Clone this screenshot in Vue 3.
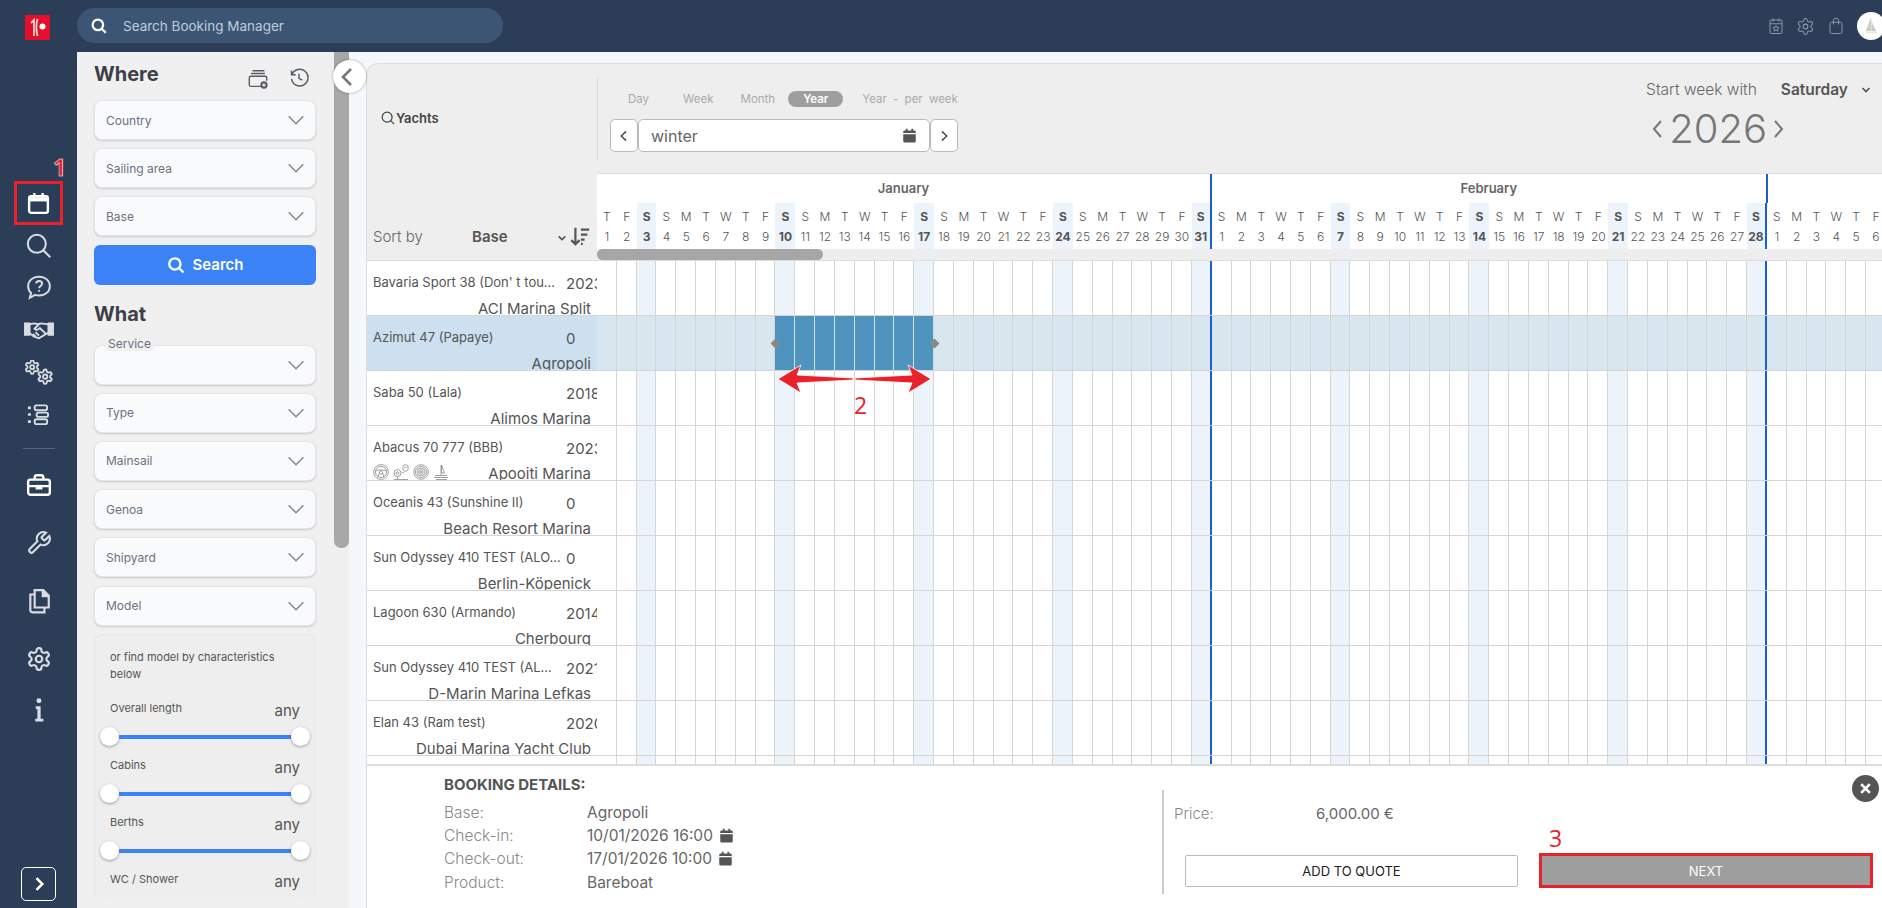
<template>
  <div class="app">
    <header class="topbar">
      <div class="logo">
        <svg viewBox="0 0 25 25" width="25" height="25">
          <rect width="25" height="25" fill="#e30f2c" />
          <path d="M6 8l3-3v16M12.500 4c-1.500 5-1.500 11 0 17" fill="none" stroke="#f7d6c8" stroke-width="1.800" />
          <circle cx="17.500" cy="11.500" r="3" fill="#fff" />
        </svg>
      </div>
      <div class="global-search">
        <svg viewBox="0 0 24 24" width="18" height="18" fill="none" stroke="#fff" stroke-width="3">
          <circle cx="10.500" cy="10.500" r="7" />
          <path d="M16 16l5 5" />
        </svg>
        <span>Search Booking Manager</span>
      </div>
      <div class="top-actions">
        <svg viewBox="0 0 24 24" width="18" height="18" fill="none" stroke="#8d9bb0" stroke-width="1.300">
          <rect x="4" y="4" width="16" height="18" rx="1.500" />
          <path d="M4 9h16M8 2v4M16 2v4M12 11.500l1.300 2.500 2.700.3-2 1.800.6 2.700-2.600-1.400-2.600 1.400.6-2.700-2-1.800 2.700-.3z" />
        </svg>
        <svg viewBox="0 0 24 24" width="19" height="19" fill="none" stroke="#8d9bb0" stroke-width="1.300">
          <path :d="gearPath" />
          <circle cx="12" cy="12" r="3" />
        </svg>
        <svg viewBox="0 0 24 24" width="18" height="18" fill="none" stroke="#8d9bb0" stroke-width="1.300">
          <rect x="4" y="7" width="16" height="15" rx="2" />
          <path d="M8.500 10V5a3.500 3.500 0 0 1 7 0v5" />
        </svg>
        <div class="avatar">
          <svg viewBox="0 0 24 24" width="20" height="20">
            <path d="M12 3v15H6zM13 8l5 10h-5zM6 20h13" fill="#c9cfc9" stroke="#c0c8c0" stroke-width="0.600" />
          </svg>
        </div>
      </div>
    </header>

    <div class="layout">
      <nav class="nav">
        <div class="nav-item">
          <svg viewBox="0 0 24 24" width="25" height="25" fill="none" stroke="#fff" stroke-width="2.300">
            <rect x="3" y="5" width="18" height="16" rx="2" />
            <path d="M3 8h18" stroke-width="4" />
            <path d="M8 2v4M16 2v4" />
          </svg>
        </div>
        <div class="nav-item">
          <svg viewBox="0 0 24 24" width="27" height="27" fill="none" stroke="#d8dde3" stroke-width="1.800">
            <circle cx="10.500" cy="10.500" r="8" />
            <path d="M16.500 16.500l6 6" />
          </svg>
        </div>
        <div class="nav-item">
          <svg viewBox="0 0 24 24" width="26" height="26" fill="none" stroke="#d8dde3" stroke-width="1.800">
            <path d="M12 2.500c5.800 0 10 3.700 10 8.700s-4.200 8.700-10 8.700c-1.300 0-2.500-.2-3.600-.6L3.500 22l1.200-4.500C3 15.900 2 13.700 2 11.200c0-5 4.200-8.700 10-8.700z" />
            <path d="M9.300 8.700c.3-1.500 1.400-2.300 2.800-2.300 1.600 0 2.800 1 2.800 2.400 0 2.200-2.800 2.300-2.800 4.300" />
            <path d="M12.100 14.800v1.500" />
          </svg>
        </div>
        <div class="nav-item">
          <svg viewBox="0 0 34 24" width="30" height="21" fill="none" stroke="#d8dde3" stroke-width="2.200">
            <path d="M1 5h5v13H1z" fill="#d8dde3" />
            <path d="M33 5h-5v13h5z" fill="#d8dde3" />
            <path d="M6 6l6-1 4 1 3-1 9 1v10l-3 1-8 5-3-1-3-1-5-4z" />
            <path d="M17 6l-5 5c1.500 2 4 1.500 6-.5l7 6.500M10 17l3 3M13 15l4 4" />
          </svg>
        </div>
        <div class="nav-item">
          <svg class="gears" viewBox="0 0 28 26" width="28" height="26" fill="none" stroke="#d8dde3" stroke-width="2.600">
            <g transform="translate(-1 -1) scale(0.680)">
              <path :d="gearPath" />
              <circle cx="12" cy="12" r="3" />
            </g>
            <g transform="translate(11.500 8) scale(0.720)">
              <path :d="gearPath" />
              <circle cx="12" cy="12" r="3" />
            </g>
          </svg>
        </div>
        <div class="nav-item">
          <svg class="list" viewBox="0 0 24 24" width="23" height="23" fill="none" stroke="#d8dde3" stroke-width="2">
            <rect x="8" y="2.500" width="13" height="5" rx="2" />
            <rect x="10" y="10" width="12" height="4.500" rx="2" />
            <rect x="8" y="17" width="13" height="5" rx="2" />
            <path d="M1 5h3M1 12h3M1 19.500h3" stroke-width="2.800" />
          </svg>
        </div>
        <div class="nav-divider"></div>
        <div class="nav-item tall">
          <svg viewBox="0 0 24 24" width="26" height="26" fill="none" stroke="#fff" stroke-width="2.200">
            <rect x="2" y="7" width="20" height="14" rx="2" />
            <path d="M8 7V5a2 2 0 0 1 2-2h4a2 2 0 0 1 2 2v2M2 13h20" />
            <path d="M10 13h4v2h-4z" fill="#fff" />
          </svg>
        </div>
        <div class="nav-item tall">
          <svg viewBox="0 0 24 24" width="26" height="26" fill="none" stroke="#d8dde3" stroke-width="1.900">
            <path d="M14.700 6.300a1 1 0 0 0 0 1.400l1.600 1.600a1 1 0 0 0 1.400 0l3.770-3.770a6 6 0 0 1-7.940 7.940l-6.910 6.910a2.120 2.120 0 0 1-3-3l6.910-6.910a6 6 0 0 1 7.940-7.940l-3.760 3.760z" />
          </svg>
        </div>
        <div class="nav-item tall">
          <svg viewBox="0 0 24 24" width="26" height="26" fill="none" stroke="#d8dde3" stroke-width="2">
            <path d="M8 2h8l5 5v11H8z" />
            <path d="M15.500 2v5.500H21" fill="#d8dde3" />
            <path d="M8 6H4v15a2 2 0 0 0 2 1.500h11v-4" />
          </svg>
        </div>
        <div class="nav-item tall">
          <svg viewBox="0 0 24 24" width="26" height="26" fill="none" stroke="#d8dde3" stroke-width="2">
            <path :d="gearPath" />
            <circle cx="12" cy="12" r="3" />
          </svg>
        </div>
        <div class="nav-item last">
          <svg viewBox="0 0 24 24" width="26" height="26" fill="#d8dde3">
            <circle cx="12" cy="3.500" r="2.300" />
            <path d="M9 8.500h4.500V20H16v2.500H8.500V20h2v-9H9z" />
          </svg>
        </div>
        <button class="nav-expand">
          <svg viewBox="0 0 24 24" width="20" height="20" fill="none" stroke="#fff" stroke-width="3">
            <path d="M9 5l7 7-7 7" />
          </svg>
        </button>
      </nav>

      <aside class="filters">
        <div class="filter-title">
          <h2>Where</h2>
          <svg viewBox="0 0 24 24" width="22" height="22" fill="none" stroke="#555c66" stroke-width="1.500">
            <path d="M6 3h13M4.500 6h15" />
            <path d="M15 20H4a1.500 1.500 0 0 1-1.500-1.500v-8A1.500 1.500 0 0 1 4 9h16a1.500 1.500 0 0 1 1.500 1.500V14" />
            <circle cx="18.500" cy="18.500" r="4" fill="#555c66" stroke="none" />
            <path d="M16.500 18.500h4M18.500 16.500v4" stroke="#fff" stroke-width="1.200" />
          </svg>
          <svg viewBox="0 0 24 24" width="20" height="20" fill="none" stroke="#555c66" stroke-width="1.700">
            <path d="M3 3v5h5" />
            <path d="M3.500 8A10 10 0 1 1 3 13" />
            <path d="M12 7v5.500l4 2" />
          </svg>
        </div>
        <div class="field" v-for="f in whereFields" :key="f">
          <span>{{ f }}</span>
          <svg class="chev" viewBox="0 0 24 24" width="22" height="22" fill="none" stroke="#7f8894" stroke-width="1.600">
            <path d="M4 8l8 8 8-8" />
          </svg>
        </div>
        <button class="search-btn">
          <svg viewBox="0 0 24 24" width="18" height="18" fill="none" stroke="#fff" stroke-width="3">
            <circle cx="10.500" cy="10.500" r="7.500" />
            <path d="M16 16l6 6" />
          </svg>
          Search
        </button>
        <h2 class="what">What</h2>
        <div class="field service">
          <label>Service</label>
          <svg class="chev" viewBox="0 0 24 24" width="22" height="22" fill="none" stroke="#7f8894" stroke-width="1.600">
            <path d="M4 8l8 8 8-8" />
          </svg>
        </div>
        <div class="field" v-for="f in whatFields" :key="f">
          <span>{{ f }}</span>
          <svg class="chev" viewBox="0 0 24 24" width="22" height="22" fill="none" stroke="#7f8894" stroke-width="1.600">
            <path d="M4 8l8 8 8-8" />
          </svg>
        </div>
        <div class="characteristics">
          <p>or find model by characteristics below</p>
          <div class="range" v-for="r in ranges" :key="r">
            <div class="range-label">
              <span>{{ r }}</span>
              <em>any</em>
            </div>
            <div class="slider">
              <i></i>
              <b></b>
              <i></i>
            </div>
          </div>
        </div>
      </aside>

      <div class="filters-scroll"><div class="filters-thumb"></div></div>

      <main class="main">
        <button class="collapse">
          <svg viewBox="0 0 24 24" width="24" height="24" fill="none" stroke="#777" stroke-width="2.600">
            <path d="M15 4l-8 8 8 8" />
          </svg>
        </button>
        <div class="card">
          <div class="head">
            <div class="head-left">
              <svg viewBox="0 0 24 24" width="14" height="14" fill="none" stroke="#444" stroke-width="2.200">
                <circle cx="10.500" cy="10.500" r="8.500" />
                <path d="M16.500 16.500l6 6" />
              </svg>
              <span>Yachts</span>
            </div>
            <div class="head-center">
              <div class="tabs">
                <span v-for="t in tabs" :key="t" :class="{ active: t === 'Year' }">{{ t }}</span>
              </div>
              <div class="date-nav">
                <button>
                  <svg viewBox="0 0 24 24" width="16" height="16" fill="none" stroke="#555" stroke-width="2.500"><path d="M15 5l-7 7 7 7" /></svg>
                </button>
                <div class="date-input">
                  <span>winter</span>
                  <svg viewBox="0 0 24 24" width="15" height="15" fill="#555">
                    <path :d="calPath" />
                  </svg>
                </div>
                <button>
                  <svg viewBox="0 0 24 24" width="16" height="16" fill="none" stroke="#555" stroke-width="2.500"><path d="M9 5l7 7-7 7" /></svg>
                </button>
              </div>
            </div>
            <div class="head-right">
              <div class="week-start">
                <span>Start week with</span>
                <strong>Saturday</strong>
                <svg viewBox="0 0 24 24" width="12" height="12" fill="none" stroke="#555" stroke-width="3.500"><path d="M5 8l7 7 7-7" /></svg>
              </div>
              <div class="year">
                <svg viewBox="0 0 12 24" width="12" height="24" fill="none" stroke="#777" stroke-width="2"><path d="M10 4l-7 8 7 8" /></svg>
                <span>2026</span>
                <svg viewBox="0 0 12 24" width="12" height="24" fill="none" stroke="#777" stroke-width="2"><path d="M2 4l7 8-7 8" /></svg>
              </div>
            </div>
          </div>

          <div class="cal-head">
            <div class="sort">
              <span class="sort-by">Sort by</span>
              <strong>Base</strong>
              <svg viewBox="0 0 24 24" width="10" height="10" fill="none" stroke="#555" stroke-width="4"><path d="M4 8l8 8 8-8" /></svg>
              <svg viewBox="0 0 24 24" width="22" height="22" fill="none" stroke="#555" stroke-width="2.400">
                <path d="M7 3v18M2.500 16.500L7 21l4.500-4.500M13 5h9M13 10.500h7M13 16h4M13 20.500h2" />
              </svg>
            </div>
            <div class="timeline">
              <div class="months">
                <div
                  v-for="m in months"
                  :key="m.name"
                  class="month"
                  :style="{ width: m.days * dayWidth + 'px' }"
                >
                  {{ m.label }}
                </div>
              </div>
              <div class="days">
                <div
                  v-for="d in days"
                  :key="d.i"
                  class="day"
                  :class="{ sat: d.sat, end: d.end }"
                >
                  <span>{{ d.letter }}</span>
                  <span>{{ d.num }}</span>
                </div>
              </div>
              <div class="hscroll"><div class="hthumb"></div></div>
            </div>
          </div>

          <div class="sheet">
            <div
              v-for="(y, r) in yachts"
              :key="r"
              class="row"
              :class="{ picked: y.picked }"
            >
              <div class="yacht">
                <div class="yacht-top">
                  <span class="yacht-name">{{ y.name }}</span>
                  <span class="yacht-year">{{ y.year }}</span>
                </div>
                <div class="yacht-bottom">
                  <div v-if="y.icons" class="yacht-icons">
                    <svg viewBox="0 0 16 16" width="16" height="16" fill="none" stroke="#888" stroke-width="0.800">
                      <circle cx="8" cy="8" r="7.400" />
                      <circle cx="8" cy="8" r="5.600" />
                      <path d="M2.500 7c3-1.500 8-1.500 11 0M6.500 8.500L5 13M9.500 8.500L11 13" />
                      <circle cx="8" cy="8.500" r="1.600" />
                    </svg>
                    <svg viewBox="0 0 16 16" width="16" height="16" fill="none" stroke="#888" stroke-width="0.800">
                      <circle cx="4.500" cy="9" r="3.500" />
                      <circle cx="4.500" cy="9" r="1.300" />
                      <path d="M4.500 12.500v3M1 15.500h14" />
                      <rect x="10" y="1" width="5" height="6" rx="1.500" />
                      <path d="M11.500 3.500h2M9 8l2 1" />
                    </svg>
                    <svg viewBox="0 0 16 16" width="16" height="16" fill="none" stroke="#888" stroke-width="0.800">
                      <circle cx="8" cy="8" r="7.300" />
                      <circle cx="8" cy="8" r="5.600" />
                      <circle cx="8" cy="8" r="3.900" />
                      <circle cx="8" cy="8" r="2.200" />
                      <circle cx="8" cy="8" r="0.700" />
                    </svg>
                    <svg viewBox="0 0 16 16" width="16" height="16" fill="none" stroke="#888" stroke-width="0.800">
                      <path d="M8.500 1l3 8H8.500zM8 1v10M2 11.500h12M1 13.500h14M3 15.500h11" />
                    </svg>
                  </div>
                  <span class="yacht-base">{{ y.base }}</span>
                </div>
              </div>
              <div class="cells">
                <div
                  v-for="d in days"
                  :key="d.i"
                  class="cell"
                  :class="{
                    sat: d.sat,
                    end: d.end,
                    booked: y.picked && d.i >= 9 && d.i <= 16,
                  }"
                ></div>
              </div>
              <template v-if="y.picked">
                <span class="handle start"></span>
                <span class="handle stop"></span>
              </template>
            </div>
          </div>

          <section class="details">
            <div class="details-left">
              <h3>BOOKING DETAILS:</h3>
              <div class="detail"><span>Base:</span><b>Agropoli</b></div>
              <div class="detail">
                <span>Check-in:</span><b>10/01/2026 16:00</b>
                <svg viewBox="0 0 24 24" width="15" height="15" fill="#555"><path :d="calPath" /></svg>
              </div>
              <div class="detail">
                <span>Check-out:</span><b>17/01/2026 10:00</b>
                <svg viewBox="0 0 24 24" width="15" height="15" fill="#555"><path :d="calPath" /></svg>
              </div>
              <div class="detail"><span>Product:</span><b>Bareboat</b></div>
            </div>
            <div class="details-right">
              <div class="price"><span>Price:</span><b>6,000.00 €</b></div>
              <div class="actions">
                <button class="quote">ADD TO QUOTE</button>
                <button class="next">NEXT</button>
              </div>
            </div>
            <button class="close">
              <svg viewBox="0 0 24 24" width="13" height="13" fill="none" stroke="#fff" stroke-width="5"><path d="M4 4l16 16M20 4L4 20" /></svg>
            </button>
          </section>
        </div>
      </main>
    </div>

    <div class="mark-box"></div>
    <span class="mark mark-one">1</span>
    <svg class="mark-arrow" viewBox="0 0 170 40" width="170" height="40">
      <path d="M8 19L31 5l-4 10 56 3v2l-56 3 4 10z" fill="#e8212b" stroke="#fff" stroke-width="0.800" />
      <path d="M161 19L138 5l4 10-57 3v2l57 3-4 10z" fill="#e8212b" stroke="#fff" stroke-width="0.800" />
    </svg>
    <span class="mark mark-two">2</span>
    <span class="mark mark-three">3</span>
  </div>
</template>

<script setup>
const gearPath =
  "M12.22 2h-.44a2 2 0 0 0-2 2v.18a2 2 0 0 1-1 1.73l-.43.25a2 2 0 0 1-2 0l-.15-.08a2 2 0 0 0-2.73.73l-.22.38a2 2 0 0 0 .73 2.73l.15.1a2 2 0 0 1 1 1.72v.51a2 2 0 0 1-1 1.74l-.15.09a2 2 0 0 0-.73 2.73l.22.38a2 2 0 0 0 2.73.73l.15-.08a2 2 0 0 1 2 0l.43.25a2 2 0 0 1 1 1.73V20a2 2 0 0 0 2 2h.44a2 2 0 0 0 2-2v-.18a2 2 0 0 1 1-1.73l.43-.25a2 2 0 0 1 2 0l.15.08a2 2 0 0 0 2.73-.73l.22-.39a2 2 0 0 0-.73-2.73l-.15-.08a2 2 0 0 1-1-1.74v-.5a2 2 0 0 1 1-1.74l.15-.09a2 2 0 0 0 .73-2.73l-.22-.38a2 2 0 0 0-2.73-.73l-.15.08a2 2 0 0 1-2 0l-.43-.25a2 2 0 0 1-1-1.73V4a2 2 0 0 0-2-2z";
const calPath =
  "M6 1h3v3h6V1h3v3h2a2 2 0 0 1 2 2v2H2V6a2 2 0 0 1 2-2h2zM2 10h20v11a2 2 0 0 1-2 2H4a2 2 0 0 1-2-2z";

const whereFields = ["Country", "Sailing area", "Base"];
const whatFields = ["Type", "Mainsail", "Genoa", "Shipyard", "Model"];
const ranges = ["Overall length", "Cabins", "Berths", "WC / Shower"];
const tabs = ["Day", "Week", "Month", "Year", "Year - per week"];

const dayWidth = 19.84;
const months = [
  { name: "jan", label: "January", days: 31 },
  { name: "feb", label: "February", days: 28 },
  { name: "mar", label: "", days: 7 },
];

const days = [];
months.forEach((m) => {
  for (let n = 1; n <= m.days; n++) {
    const i = days.length;
    const wd = (4 + i) % 7;
    days.push({
      i,
      num: n,
      letter: "SMTWTFS"[wd],
      sat: wd === 6,
      end: n === m.days && m.name !== "mar",
    });
  }
});

const yachts = [
  { name: "Bavaria Sport 38 (Don' t tou...", year: "2023", base: "ACI Marina Split" },
  { name: "Azimut 47 (Papaye)", year: "0", base: "Agropoli", picked: true },
  { name: "Saba 50 (Lala)", year: "2018", base: "Alimos Marina" },
  { name: "Abacus 70 777 (BBB)", year: "2023", base: "Apooiti Marina", icons: true },
  { name: "Oceanis 43 (Sunshine II)", year: "0", base: "Beach Resort Marina" },
  { name: "Sun Odyssey 410 TEST (ALO...", year: "0", base: "Berlin-Köpenick" },
  { name: "Lagoon 630 (Armando)", year: "2014", base: "Cherbourg" },
  { name: "Sun Odyssey 410 TEST (AL...", year: "2021", base: "D-Marin Marina Lefkas" },
  { name: "Elan 43 (Ram test)", year: "2020", base: "Dubai Marina Yacht Club" },
  { name: "", year: "", base: "" },
];
</script>

<style>
html,
body {
  margin: 0;
  overflow: hidden;
}
</style>

<style scoped>
.app {
  position: relative;
  width: 1882px;
  height: 908px;
  overflow: hidden;
  font-family: Inter, "Noto Sans", sans-serif;
  background: #2c3e57;
  color: #555;
}
button {
  font-family: inherit;
  cursor: pointer;
}

/* top bar */
.topbar {
  height: 52px;
  display: flex;
  align-items: center;
}
.logo {
  width: 77px;
  height: 52px;
  padding: 15px 0 0 25px;
  box-sizing: border-box;
}
.global-search {
  width: 426px;
  height: 35px;
  margin-top: -1px;
  border-radius: 18px;
  background: #3d5575;
  display: flex;
  align-items: center;
  gap: 15px;
  padding-left: 13px;
  box-sizing: border-box;
  color: #c0cbd9;
  font-size: 13.500px;
}
.top-actions {
  margin-left: auto;
  display: flex;
  align-items: center;
  gap: 11.500px;
  margin-right: -3px;
}
.avatar {
  width: 28px;
  height: 28px;
  flex: none;
  border-radius: 50%;
  background: #fff;
  margin-left: 1px;
  display: flex;
  align-items: center;
  justify-content: center;
}

.layout {
  display: flex;
  height: 856px;
}

/* left nav */
.nav {
  width: 77px;
  flex: none;
  padding-top: 130px;
  box-sizing: border-box;
  display: flex;
  flex-direction: column;
  align-items: center;
}
.nav-item {
  height: 42px;
  display: flex;
  align-items: center;
  justify-content: center;
}
.nav-item.tall {
  height: 58px;
}
.nav-item.last {
  height: 44px;
}
.gears {
  margin-top: 4px;
}
.list {
  margin-top: 3px;
}
.nav-divider {
  width: 32px;
  height: 1px;
  background: #56677e;
  margin: 14px 0 7px;
  flex: none;
}
.nav-expand {
  margin-top: auto;
  margin-bottom: 7px;
  width: 35px;
  height: 34px;
  border: 1px solid #fff;
  border-radius: 5px;
  background: transparent;
  padding: 0;
  display: flex;
  align-items: center;
  justify-content: center;
}

/* filters */
.filters {
  width: 257px;
  flex: none;
  background: #f0f0f0;
  padding: 0 18px 0 17px;
  box-sizing: border-box;
  overflow: hidden;
}
h2 {
  margin: 0;
  font-size: 20px;
  font-weight: 700;
  color: #3d3f47;
}
.filter-title {
  height: 48px;
  display: flex;
  align-items: center;
  padding-bottom: 4px;
  box-sizing: border-box;
}
.filter-title h2 {
  flex: 1;
}
.filter-title svg {
  margin-top: 10px;
}
.filter-title svg:last-child {
  margin: 8px 7px 0 20px;
}
.field {
  position: relative;
  height: 40px;
  margin-bottom: 8.200px;
  background: #f9fafb;
  border: 1px solid #e4e5e8;
  border-radius: 8px;
  box-shadow: 0 1px 2px rgba(0, 0, 0, 0.16);
  box-sizing: border-box;
  display: flex;
  align-items: center;
  padding: 0 11px;
  font-size: 12px;
  color: #6b7280;
}
.chev {
  position: absolute;
  right: 8px;
  top: 8px;
}
.search-btn {
  width: 100%;
  height: 40px;
  border: none;
  border-radius: 6px;
  background: #3b82f6;
  color: #fff;
  font-size: 15px;
  font-weight: 600;
  display: flex;
  align-items: center;
  justify-content: center;
  gap: 8px;
}
.what {
  margin: 17px 0 19px;
  line-height: 24px;
}
.service label {
  position: absolute;
  top: -9px;
  left: 11px;
  padding: 0 2px;
  background: #f0f0f0;
  font-size: 12px;
  line-height: 14px;
}
.characteristics {
  margin-top: 0;
  background: #eee;
  border: 1px solid #e8e8e8;
  border-bottom: none;
  border-radius: 8px 8px 0 0;
  padding: 14px 15px 0;
  height: 263px;
  box-sizing: border-box;
  overflow: hidden;
  font-size: 11px;
  color: #555;
}
.characteristics p {
  margin: 0 0 18px;
  line-height: 17px;
  width: 180px;
}
.range {
  height: 57px;
}
.range-label {
  display: flex;
  justify-content: space-between;
  height: 35px;
  align-items: flex-start;
}
.range-label em {
  font-style: normal;
  font-size: 15px;
  color: #555;
}
.slider {
  display: flex;
  align-items: center;
  margin: -9px -10px 0;
  height: 20px;
}
.slider i {
  width: 19px;
  height: 19px;
  border-radius: 50%;
  background: #fff;
  box-shadow: 0 1px 3px rgba(0, 0, 0, 0.35);
  flex: none;
}
.slider b {
  flex: 1;
  height: 4px;
  background: #3b82f6;
}
.filters-scroll {
  width: 15px;
  flex: none;
  background: #f0f0f0;
}
.filters-thumb {
  height: 496px;
  background: #a8a8a8;
  border-radius: 0 0 7px 7px;
}

/* main area */
.main {
  position: relative;
  flex: 1;
  min-width: 0;
  background: #f4f8fc;
  padding: 11px 0 0 17px;
}
.collapse {
  position: absolute;
  left: -16px;
  top: 8px;
  width: 33px;
  height: 33px;
  border: none;
  border-radius: 50%;
  background: #fff;
  box-shadow: 0 0 3px rgba(0, 0, 0, 0.35);
  padding: 0 3px 0 0;
  z-index: 3;
  display: flex;
  align-items: center;
  justify-content: center;
}
.card {
  height: 845px;
  background: #eee;
  border: 1px solid #ddd;
  border-width: 1px 0 0 1px;
  border-top-left-radius: 12px;
  overflow: hidden;
  display: flex;
  flex-direction: column;
}
.head {
  height: 109px;
  flex: none;
  display: flex;
}
.head-left {
  width: 230px;
  flex: none;
  padding: 0 0 2px 14px;
  box-sizing: border-box;
  display: flex;
  align-items: center;
  gap: 1px;
  font-size: 13px;
  font-weight: 600;
  color: #444;
}
.head-center {
  margin: 14px 0 13px;
  border-left: 1px solid #d8d8d8;
  padding: 13px 0 0 15px;
}
.tabs {
  display: flex;
  align-items: center;
  height: 16px;
  font-size: 11.500px;
  color: #aaa;
}
.tabs span {
  padding: 0 15px;
  line-height: 16px;
  white-space: nowrap;
}
.tabs span:nth-child(1) {
  margin-right: 4px;
}
.tabs span:nth-child(2) {
  margin-right: -3px;
}
.tabs span:nth-child(4) {
  margin-right: 4px;
  margin-left: -2px;
}
.tabs span:nth-child(5) {
  word-spacing: 3px;
}
.tabs .active {
  background: #9e9e9e;
  border-radius: 8px;
  color: #fff;
  font-weight: 600;
}
.date-nav {
  display: flex;
  margin-top: 12px;
  margin-left: -3px;
  height: 33px;
}
.date-nav button {
  width: 28px;
  height: 33px;
  padding: 0;
  border: 1px solid #bbb;
  border-radius: 5px;
  background: #fff;
  display: flex;
  align-items: center;
  justify-content: center;
}
.date-input {
  width: 292px;
  background: #fff;
  border: 1px solid #bbb;
  border-radius: 5px;
  box-sizing: border-box;
  display: flex;
  align-items: center;
  justify-content: space-between;
  padding: 0 12px;
  font-size: 16px;
  color: #666;
}
.head-right {
  margin-left: auto;
  padding-top: 16px;
  font-size: 15.500px;
}
.week-start {
  display: flex;
  align-items: center;
  justify-content: flex-end;
  padding-right: 10px;
  gap: 20px;
  font-weight: 300;
  color: #666;
}
.week-start strong {
  font-weight: 600;
  color: #555;
  margin: 0 -8px 0 4px;
}
.year {
  display: flex;
  align-items: center;
  justify-content: flex-end;
  margin-top: 6px;
  margin-right: 97px;
  gap: 6px;
  font-size: 40px;
  font-weight: 300;
  line-height: 48px;
  color: #777;
}

/* calendar header */
.cal-head {
  height: 87px;
  flex: none;
  display: flex;
  border-bottom: 1px solid #ddd;
}
.sort {
  width: 230px;
  flex: none;
  box-sizing: border-box;
  padding: 0 6px 13px 6px;
  display: flex;
  align-items: flex-end;
  font-size: 15px;
  line-height: 20px;
}
.sort-by {
  font-weight: 300;
  color: #666;
  width: 99px;
}
.sort strong {
  font-weight: 600;
  flex: 1;
}
.sort svg {
  margin-bottom: 4px;
}
.sort svg:last-child {
  margin: 0 0 0 2px;
}
.timeline {
  flex: 1;
  min-width: 0;
  overflow: hidden;
}
.months {
  height: 30px;
  display: flex;
  background: #fff;
  border-top: 1px solid #ddd;
  box-sizing: border-box;
}
.month {
  flex: none;
  box-sizing: border-box;
  text-align: center;
  font-size: 13px;
  font-weight: 600;
  line-height: 28px;
  color: #666;
  border-right: 2px solid #1a5fd0;
}
.month:last-child {
  border: none;
}
.days {
  height: 46px;
  display: flex;
  background: #fff;
}
.day {
  width: 19.840px;
  flex: none;
  box-sizing: border-box;
  display: flex;
  flex-direction: column;
  align-items: center;
  padding-top: 4px;
  font-size: 12px;
  font-weight: 300;
  line-height: 20px;
  color: #555;
}
.day.sat {
  background: #edf3fb;
  font-weight: 700;
}
.day.end {
  border-right: 2px solid #1a5fd0;
}
.hscroll {
  height: 11px;
  background: #eee;
}
.hthumb {
  width: 226px;
  height: 11px;
  border-radius: 6px;
  background: #a6a6a6;
}

/* rows */
.sheet {
  flex: 1;
  min-height: 0;
  overflow: hidden;
  background: #fff;
}
.row {
  position: relative;
  height: 55px;
  display: flex;
  border-bottom: 1px solid #d5d5d5;
  box-sizing: border-box;
}
.yacht {
  width: 230px;
  flex: none;
  height: 54px;
  overflow: hidden;
  padding: 13px 6px 0;
  box-sizing: border-box;
  background: #fff;
}
.yacht-top {
  display: flex;
  height: 26px;
}
.yacht-name {
  width: 193px;
  flex: none;
  font-size: 13px;
  line-height: 16px;
  white-space: nowrap;
  overflow: hidden;
}
.yacht-year {
  font-size: 15px;
  line-height: 20px;
  white-space: nowrap;
}
.yacht-bottom {
  display: flex;
  align-items: flex-start;
  justify-content: flex-end;
}
.yacht-icons {
  display: flex;
  gap: 4px;
  margin-right: auto;
  margin-top: -1px;
}
.yacht-base {
  font-size: 15px;
  line-height: 18px;
  white-space: nowrap;
}
.cells {
  display: flex;
  flex: none;
}
.cell {
  width: 19.840px;
  flex: none;
  box-sizing: border-box;
  border-right: 1px solid #d5d5d5;
}
.cell.sat {
  background: #edf3fb;
}
.cell.end {
  border-right: 2px solid #1a5fd0;
}
.picked .yacht {
  background: #cce0f0;
}
.picked .cells {
  background: #d8e6f0;
}
.picked .cell.sat {
  background: transparent;
}
.picked .cell.booked {
  background: #4f94bf;
  border-right-color: #cfe0ec;
}
.handle {
  position: absolute;
  top: 24px;
  width: 7px;
  height: 7px;
  background: #888;
  transform: rotate(45deg);
}
.handle.start {
  left: 405px;
}
.handle.stop {
  left: 564px;
}

/* booking details */
.details {
  position: relative;
  height: 145px;
  flex: none;
  background: #fff;
  border-top: 2px solid #ddd;
  box-sizing: border-box;
  display: flex;
  justify-content: space-between;
}
.details-left {
  padding: 9px 0 0 77px;
  font-size: 15.500px;
}
.details-left h3 {
  margin: 0 0 6px;
  font-size: 15px;
  line-height: 20px;
  font-weight: 700;
  color: #555;
}
.detail {
  display: flex;
  align-items: center;
  height: 23.200px;
  gap: 6px;
}
.detail span,
.price span {
  font-weight: 300;
  color: #888;
}
.detail span {
  width: 137px;
}
.detail b,
.price b {
  font-weight: 400;
  color: #666;
}
.details-right {
  width: 720px;
  height: 104px;
  margin-top: 24px;
  border-left: 2px solid #ccc;
  box-sizing: border-box;
  font-size: 15px;
}
.price {
  display: flex;
  padding: 14px 0 0 10px;
  line-height: 20px;
}
.price span {
  width: 142px;
}
.actions {
  display: flex;
  align-items: center;
  gap: 21px;
  margin: 29px 0 0 21px;
}
.quote {
  width: 333px;
  height: 32px;
  background: #fff;
  border: 1px solid #bbb;
  border-radius: 2px;
  font-size: 13px;
  color: #222;
}
.next {
  width: 334px;
  height: 35px;
  background: #9e9e9e;
  border: 3px solid #e8212b;
  color: #fff;
  font-size: 13px;
}
.close {
  position: absolute;
  right: 3px;
  top: 9px;
  width: 27px;
  height: 27px;
  border: none;
  border-radius: 50%;
  padding: 0;
  background: #555;
  display: flex;
  align-items: center;
  justify-content: center;
}

/* red annotations drawn over the screenshot */
.mark-box {
  position: absolute;
  left: 14px;
  top: 181px;
  width: 49px;
  height: 44px;
  box-sizing: border-box;
  border: 3px solid #e8212b;
}
.mark {
  position: absolute;
  color: #e8212b;
  font-family: "Open Sans", sans-serif;
  font-size: 23px;
  line-height: 24px;
}
.mark-one {
  left: 53px;
  top: 155px;
  font-weight: 700;
  -webkit-text-stroke: 0.5px #fff;
}
.mark-two {
  left: 854px;
  top: 393px;
}
.mark-three {
  left: 1549px;
  top: 826px;
}
.mark-arrow {
  position: absolute;
  left: 770px;
  top: 360px;
}
</style>
